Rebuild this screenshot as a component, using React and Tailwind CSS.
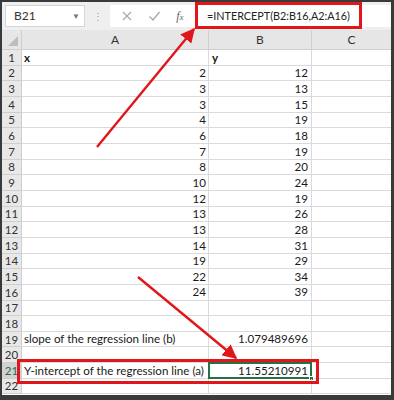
import React from "react";

const rows = [
  ["x", "y", true],
  ["2", "12"],
  ["3", "13"],
  ["3", "15"],
  ["4", "19"],
  ["6", "18"],
  ["7", "19"],
  ["8", "20"],
  ["10", "24"],
  ["12", "19"],
  ["13", "26"],
  ["13", "28"],
  ["14", "31"],
  ["19", "29"],
  ["22", "34"],
  ["24", "39"],
  ["", ""],
  ["", ""],
  ["slope of the regression line (b)", "1.079489696", false, true],
  ["", ""],
  ["Y-intercept of the regression line (a)", "11.55210991", false, true, true],
  ["", ""],
];

function Row({ n, a, b, bold, textA, selected }) {
  return (
    <div className="flex h-[15.67px] shrink-0 whitespace-nowrap">
      <div
        className={`w-[20px] flex items-center justify-center border-r border-b border-[#cfcfcf] text-[11.5px] ${
          selected ? "bg-[#d2d2d2] text-[#217346]" : "bg-[#e8e8e8] text-[#333]"
        }`}
      >
        {n}
      </div>
      <div
        className={`w-[187px] flex items-center border-r border-b border-[#dadada] px-[2px] ${
          textA || bold ? "justify-start" : "justify-end"
        } ${bold ? "font-bold" : ""}`}
      >
        {a}
      </div>
      <div
        className={`relative w-[103px] flex items-center border-r border-b border-[#dadada] px-[3px] ${
          bold ? "justify-start font-bold" : "justify-end"
        }`}
      >
        {b}
        {selected && (
          <div className="absolute inset-[-1px] border-2 border-[#217346]">
            <div className="absolute right-[-4px] bottom-[-4px] w-[5px] h-[5px] bg-[#217346] border border-white" />
          </div>
        )}
      </div>
      <div className="flex-1 border-b border-[#dadada]" />
    </div>
  );
}

export default function App() {
  return (
    <div className="w-[394px] h-[400px] bg-[#3a3a3a] pt-[2px] pl-[2px] pr-[3px] pb-[5px]">
      <div
        className="relative w-full h-full bg-white overflow-hidden text-[11.6px] text-[#1a1a1a] flex flex-col"
        style={{ fontFamily: "Lato, 'Open Sans', sans-serif" }}
      >
        {/* formula bar */}
        <div className="h-[28px] shrink-0 bg-[#efefef] flex items-center">
          <div className="ml-[3px] w-[80px] h-[22px] bg-white border border-[#d6d6d6] flex items-center justify-between pl-[8px] pr-[4px] text-[#333] text-[12px]">
            <span>B21</span>
            <span className="text-[8px] text-[#777]">▼</span>
          </div>
          <div className="w-[25px] flex justify-center text-[#999] text-[10px] leading-none">⋮</div>
          <div className="w-[85px] h-[22px] bg-white flex items-center justify-around text-[#a8a8a8] px-[4px]">
            <svg width="12" height="12" viewBox="0 0 12 12" stroke="currentColor" strokeWidth="1.3" fill="none">
              <path d="M2 2 L10 10 M10 2 L2 10" />
            </svg>
            <svg width="13" height="12" viewBox="0 0 13 12" stroke="currentColor" strokeWidth="1.3" fill="none">
              <path d="M1.5 6.5 L5 10 L11.5 2" />
            </svg>
            <span className="italic text-[#666] text-[12px]" style={{ fontFamily: "'Liberation Serif', serif" }}>
              f<span className="text-[9px]">x</span>
            </span>
          </div>
          <div className="flex-1 h-[22px] bg-white ml-[2px] flex items-center pl-[10px] text-[10.8px] text-[#222] whitespace-nowrap">
            =INTERCEPT(B2:B16,A2:A16)
          </div>
        </div>

        {/* column headers */}
        <div className="h-[20px] shrink-0 flex bg-[#e6e6e6] border-b border-[#cfcfcf] text-[#333] text-[12px]">
          <div className="w-[20px] relative border-r border-[#cfcfcf]">
            <div className="absolute right-[3px] bottom-[3px] w-0 h-0 border-l-[10px] border-l-transparent border-b-[10px] border-b-[#bdbdbd]" />
          </div>
          <div className="w-[187px] flex items-center justify-center border-r border-[#cfcfcf]">A</div>
          <div className="w-[103px] flex items-center justify-center border-r border-[#cfcfcf]">B</div>
          <div className="flex-1 flex items-center justify-center">C</div>
        </div>

        {/* grid */}
        {rows.map((r, i) => (
          <Row key={i} n={i + 1} a={r[0]} b={r[1]} bold={r[2]} textA={r[3]} selected={r[4]} />
        ))}

        {/* highlight boxes */}
        <div className="absolute left-[193px] top-[0px] w-[167px] h-[27px] border-[3px] border-[#e0161b]" />
        <div className="absolute left-[15px] top-[357px] w-[302px] h-[25px] border-[3px] border-[#e0161b]" />

        {/* arrows */}
        <svg className="absolute inset-0 pointer-events-none" width="389" height="393" viewBox="0 0 389 393">
          <defs>
            <marker id="ah" viewBox="0 0 10 10" refX="9" refY="5" markerWidth="6" markerHeight="6" orient="auto">
              <path d="M0 0 L10 5 L0 10 Z" fill="#e0161b" />
            </marker>
          </defs>
          <line x1="95" y1="145" x2="192" y2="27" stroke="#e0161b" strokeWidth="2.4" markerEnd="url(#ah)" />
          <line x1="136" y1="275" x2="234" y2="356" stroke="#e0161b" strokeWidth="2.4" markerEnd="url(#ah)" />
        </svg>
      </div>
    </div>
  );
}
